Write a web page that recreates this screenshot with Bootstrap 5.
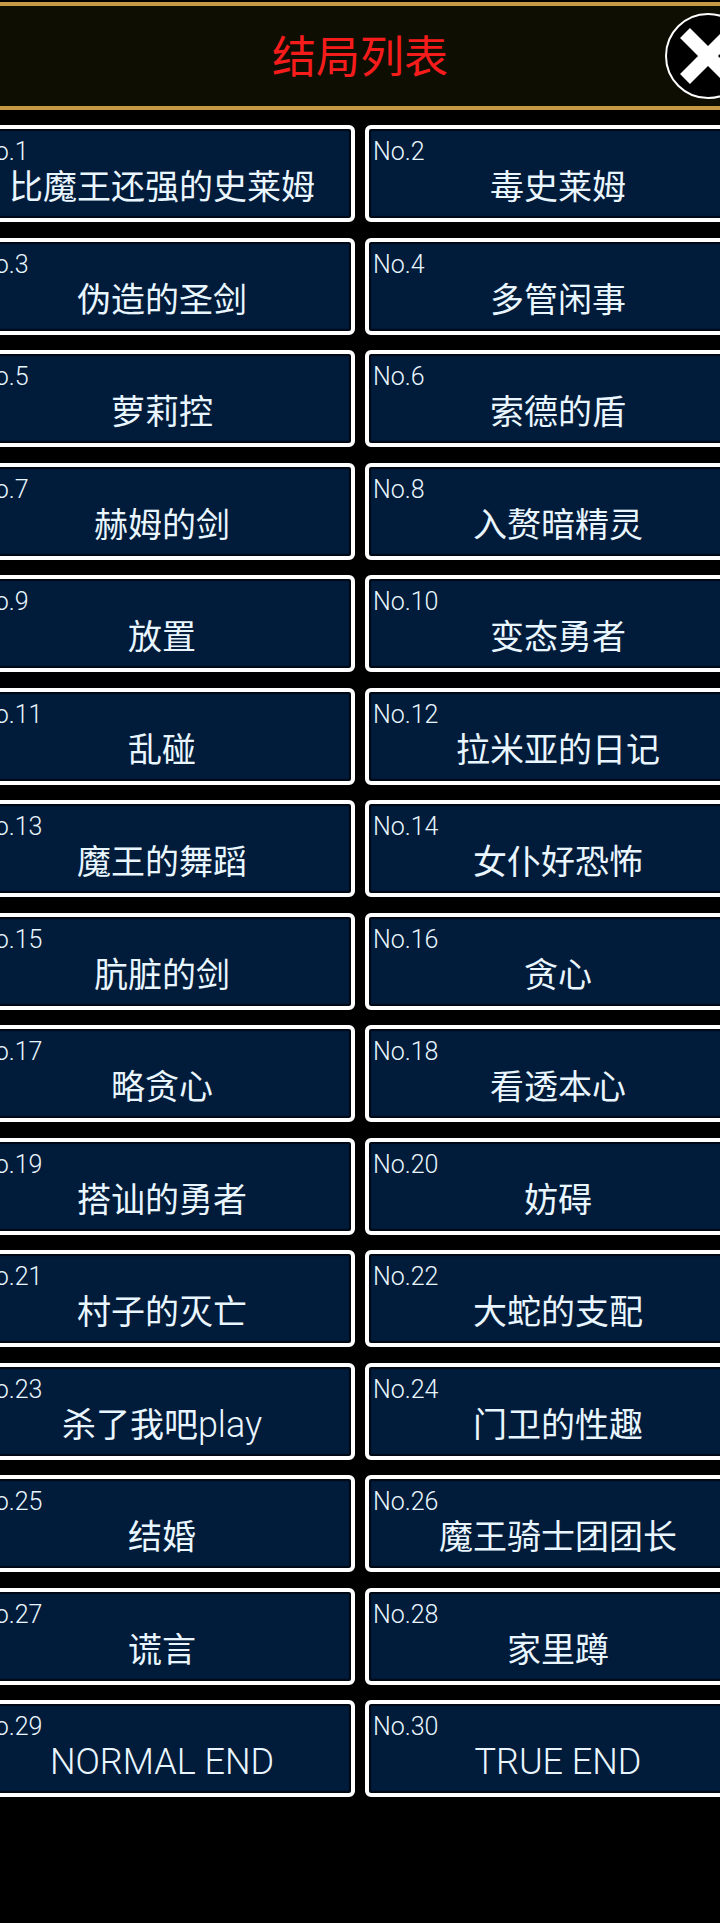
<!DOCTYPE html>
<html lang="zh-CN">
<head>
<meta charset="utf-8">
<meta name="viewport" content="width=device-width, initial-scale=1">
<title>结局列表</title>
<link href="https://cdn.jsdelivr.net/npm/bootstrap@5.3.0/dist/css/bootstrap.min.css" rel="stylesheet">
<style>
  body {
    background: #000;
    color: #eaf6ff;
    font-family: Roboto, "Noto Sans CJK SC", sans-serif;
  }
  .title-bar {
    min-height: 108px;
    margin-top: 2px;
    background: #0e0e02;
    border-block: 4px solid #c69a45;
  }
  .title-bar h1 {
    padding-top: 4px;
    color: #f71c1c;
    font-size: 44px;
    line-height: 64px;
    font-weight: 400;
  }
  .close-btn {
    right: -31px;
    width: 86px;
    height: 86px;
  }
  .ending-grid {
    display: grid;
    grid-template-columns: 1fr 1fr;
    gap: 15px 10px;
    margin: 15px -31px 0;
  }
  .ending {
    min-height: 97px;
    padding: 9px 4px 4px;
    background: #001c3a;
    border: 4px solid #fff;
    border-radius: 6px;
    box-shadow: inset 0 0 1px 2px #000814;
    color: inherit;
  }
  .ending:nth-child(4n), .ending:nth-child(4n + 3) { margin-top: 1px; }
  .ending-no { font-size: 25px; line-height: 28px; font-weight: 300; }
  .ending-name { font-size: 34px; line-height: 42px; }
  .ending-latin { font-size: 36px; font-weight: 300; }
</style>
</head>
<body>
<div class="overflow-hidden">
  <header class="title-bar position-relative d-flex align-items-center justify-content-center">
    <h1 class="m-0">结局列表</h1>
    <button type="button" class="close-btn btn p-0 border-0 position-absolute" aria-label="关闭">
      <svg class="d-block" width="86" height="86" viewBox="0 0 86 86" aria-hidden="true">
        <circle cx="43" cy="43" r="42" fill="#000" stroke="#fff" stroke-width="2"/>
        <path d="M20 20L66 66M66 20L20 66" stroke="#fff" stroke-width="14"/>
      </svg>
    </button>
  </header>
  <main class="ending-grid" id="endings"></main>
</div>
<script>
  const names = [
    "比魔王还强的史莱姆", "毒史莱姆", "伪造的圣剑", "多管闲事", "萝莉控", "索德的盾",
    "赫姆的剑", "入赘暗精灵", "放置", "变态勇者", "乱碰", "拉米亚的日记",
    "魔王的舞蹈", "女仆好恐怖", "肮脏的剑", "贪心", "略贪心", "看透本心",
    "搭讪的勇者", "妨碍", "村子的灭亡", "大蛇的支配", "杀了我吧play", "门卫的性趣",
    "结婚", "魔王骑士团团长", "谎言", "家里蹲", "NORMAL END", "TRUE END"
  ];
  const withLatin = name => name.replace(/[A-Za-z ]+/g, '<span class="ending-latin">$&</span>');
  document.getElementById("endings").innerHTML = names.map((name, i) =>
    `<button type="button" class="ending d-flex flex-column align-items-start">
      <span class="ending-no">No.${i + 1}</span>
      <span class="ending-name w-100 text-center">${withLatin(name)}</span>
    </button>`).join("");
</script>
<script src="https://cdn.jsdelivr.net/npm/bootstrap@5.3.0/dist/js/bootstrap.bundle.min.js"></script>
</body>
</html>
